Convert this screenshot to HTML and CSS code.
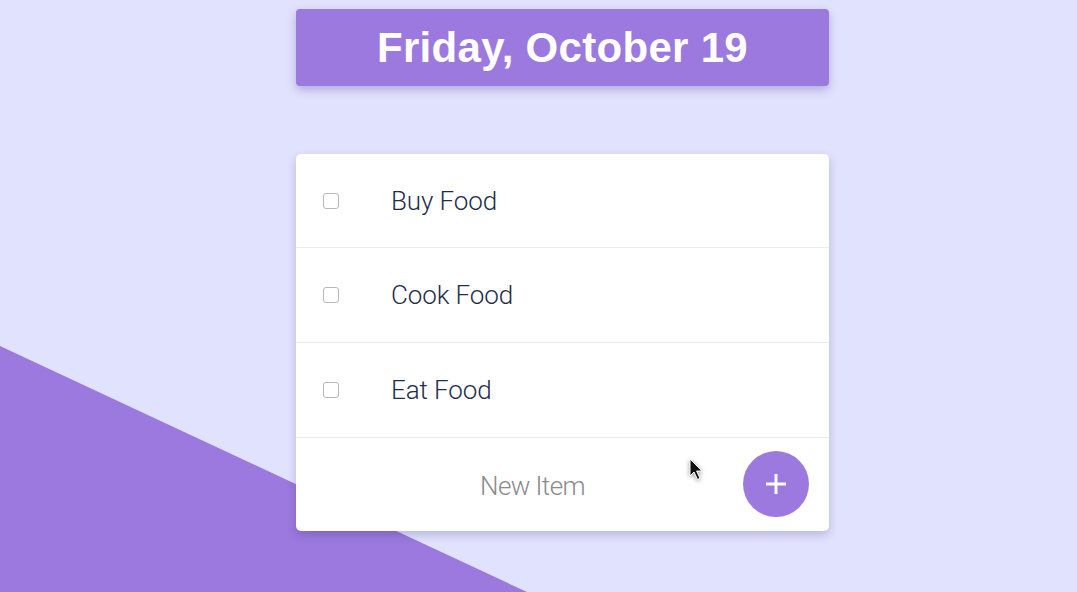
FILE: index.html
```html
<!DOCTYPE html>
<html>
<head>
<meta charset="utf-8">
<link rel="stylesheet" href="styles.css">
</head>
<body>
<div class="bg-shape"></div>
<main class="app">
  <header class="date-box"><h1>Friday, October 19</h1></header>
  <section class="card">
    <div class="row"><span class="check"></span><p class="item">Buy Food</p></div>
    <div class="row"><span class="check"></span><p class="item">Cook Food</p></div>
    <div class="row"><span class="check"></span><p class="item">Eat Food</p></div>
    <div class="row new-row">
      <div class="new-input">New Item</div>
      <button class="add-btn"><svg width="22" height="22" viewBox="0 0 22 22"><path d="M11 1v20M1 11h20" stroke="#fff" stroke-width="3" fill="none"/></svg></button>
      <svg class="cursor" width="16" height="24" viewBox="0 0 16 24"><path d="M1 1 L1 18 L5 14 L8.5 21.5 L11 20.3 L7.6 13 L13 13 Z" fill="#111" stroke="#fff" stroke-width="1"/></svg>
    </div>
  </section>
</main>
</body>
</html>
```
FILE: styles.css
```css
html, body { margin: 0; padding: 0; }
body {
  background: #e1e2fe;
  width: 1077px;
  height: 592px;
  overflow: hidden;
  position: relative;
  font-family: "Liberation Sans", Arial, sans-serif;
}
.bg-shape {
  position: absolute;
  inset: 0;
  background: #9b79de;
  clip-path: polygon(0 346px, 527px 592px, 0 592px);
}
.app {
  position: relative;
  width: 533px;
  margin-left: 296px;
  padding-top: 9px;
  display: flex;
  flex-direction: column;
  gap: 68px;
}
.date-box {
  height: 77px;
  background: #9b79de;
  border-radius: 4px;
  box-shadow: 0 4px 10px rgba(70, 50, 140, 0.3);
  display: flex;
  align-items: center;
  justify-content: center;
}
.date-box h1 {
  margin: 0;
  color: #fff;
  font-size: 42px;
  font-weight: 700;
  letter-spacing: 0.3px;
}
.card {
  background: #fff;
  border-radius: 5px;
  box-shadow: 0 4px 10px rgba(40, 30, 90, 0.22);
  display: flex;
  flex-direction: column;
}
.row {
  height: 94px;
  display: flex;
  align-items: center;
  border-bottom: 1px solid #ececf0;
  padding-left: 27px;
}
.row:first-child {
  height: 93px;
}
.check {
  width: 14px;
  height: 14px;
  border: 1px solid #b8b8bc;
  border-radius: 3px;
  background: #fff;
  margin-right: 52px;
}
.item {
  margin: 0;
  font-family: Roboto, "Liberation Sans", sans-serif;
  font-weight: 300;
  font-size: 26px;
  color: #1f2d4a;
  letter-spacing: -0.1px;
}
.new-row {
  height: 93px;
  border-bottom: none;
  position: relative;
  padding-left: 0;
}
.new-input {
  flex: 1;
  text-align: center;
  font-family: Roboto, "Liberation Sans", sans-serif;
  font-weight: 300;
  font-size: 26px;
  color: #8a8a8e;
  letter-spacing: -0.6px;
  padding-left: 26px;
  padding-top: 2px;
}
.add-btn {
  width: 66px;
  height: 66px;
  border-radius: 50%;
  background: #9b79de;
  border: none;
  margin-right: 20px;
  margin-bottom: 2px;
  display: flex;
  align-items: center;
  justify-content: center;
  padding: 0;
}
.cursor {
  position: absolute;
  left: 393px;
  top: 20px;
  filter: drop-shadow(0 1px 2px rgba(0,0,0,0.4));
}
```
